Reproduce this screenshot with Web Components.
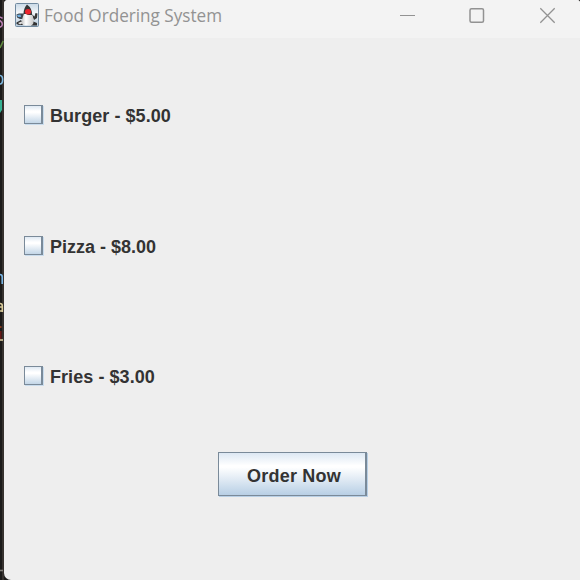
<!DOCTYPE html>
<html lang="en">
<head>
<meta charset="utf-8">
<title>Food Ordering System</title>
<style>
html,body{margin:0;width:580px;height:580px;overflow:hidden;background:#1c1b1a}
body{display:flex}
</style>
</head>
<body>
<editor-edge></editor-edge>
<app-window>
  <title-bar slot="title">Food Ordering System</title-bar>
  <check-item>Burger - $5.00</check-item>
  <check-item style="letter-spacing:0">Pizza - $8.00</check-item>
  <check-item>Fries - $3.00</check-item>
  <metal-button slot="actions">Order Now</metal-button>
</app-window>
<script>
const define = (name, html) => customElements.define(name, class extends HTMLElement {
  constructor() {
    super();
    const t = document.createElement('template');
    t.innerHTML = html;
    this.attachShadow({mode: 'open'}).append(t.content.cloneNode(true));
  }
});

define('editor-edge', `
<style>
:host{display:block;flex:none;width:4px;height:580px;overflow:hidden;
background:linear-gradient(90deg,#1b1a19 0 2px,#35312e 2px)}
svg{display:block}
</style>
<svg width="4" height="580" fill="none" stroke-width="1.6">
<path stroke="#b77fb2" d="M2.500 18.500C1 16.500-1 17-1 19S2.300 21 2.300 24S0 27.500-2 26"/>
<path stroke="#5f8a3f" d="M3.200 41L0 48"/>
<path stroke="#7fb9e0" d="M0 75.500C3.500 75 3.500 84 0 84"/>
<path fill="#36b193" d="M0 100H2V110L0 113Z"/>
<path stroke="#7ab6e4" d="M0 274.500Q2.200 274.500 2.200 277V284"/>
<path stroke="#d9cb9b" d="M0 303.500Q2.300 303.500 2.300 306V312M2 307H0M2 311H0"/>
<path stroke="#a5431f" d="M0 327H1.500"/><path stroke="#651a17" d="M.8 331V339"/>
<path stroke="#d6c89b" d="M0 340H3"/>
<path stroke="#807d78" d="M0 570.500H3"/>
</svg>`);

define('app-window', `
<style>
:host{display:flex;flex-direction:column;width:576px;height:580px;background:#eee;
border-radius:4px 3px 0 7px;overflow:hidden}
main{display:grid;grid-template-rows:131px 131px 129px;padding:11px 20px 0}
footer{display:flex;justify-content:center;padding-top:12px;padding-left:1px}
</style>
<slot name="title"></slot>
<main><slot></slot></main>
<footer><slot name="actions"></slot></footer>`);

define('title-bar', `
<style>
:host{display:flex;flex:none;box-sizing:border-box;height:38px;background:#f3f3f3;color:#929292;
padding:3px 24px 0 11px;align-items:flex-start;
font:17.500px/26px "Open Sans","Noto Sans",sans-serif}
.icon{flex:none;margin-right:5px}
svg{display:block}
.label{flex:1;height:26px}
.controls{display:flex;gap:54px;padding-top:4px}
</style>
<svg class="icon" width="24" height="24" viewBox="0 0 24 24">
<defs>
<linearGradient id="g" x2="0" y2="1"><stop stop-color="#c9d9e6"/><stop offset=".4" stop-color="#f2f6f9"/><stop offset="1" stop-color="#b5c9db"/></linearGradient>
<linearGradient id="b"><stop stop-color="#c4c4c4"/><stop offset=".35" stop-color="#fff"/><stop offset="1" stop-color="#c9c9c9"/></linearGradient>
</defs>
<rect x=".5" y=".5" width="23" height="23" rx="1" fill="url(#g)" stroke="#70899f"/>
<path d="M1.500 11.500L4 10.500L10 10.500L9.500 16L5 16L2 14.500Z" fill="#3f4851"/>
<path d="M2 12L5.500 11.500L6 14L3 14Z" fill="#70aee0"/>
<path d="M16 10.500L19.500 13.500L20.500 10L22.500 10.500L22 15L19 17Z" fill="#383838"/>
<path d="M1.500 19.500L6 17L9 22H4L1.500 21ZM17 18L22 20V22.500H16Z" fill="#333"/>
<path d="M3 20L6.500 18.500L8 20L5 21.500Z" fill="#ddd"/>
<path d="M9.500 9L7 16.500Q6 21.500 9 22.500H16Q19 21.500 18.500 17Q18 12 15.500 9Z" fill="url(#b)"/>
<path d="M12 1.500C10 3.500 8.500 7 8.500 11L11 11L13 12L17 12Q17.500 5.500 12 1.500Z" fill="#363636"/>
<ellipse cx="13" cy="8.700" rx="3" ry="2.700" fill="#ed242d"/>
</svg>
<span class="label"><svg width="185" height="26"><text x="0" y="19" textLength="178" lengthAdjust="spacingAndGlyphs" fill="currentColor">Food Ordering System</text></svg></span>
<span class="controls">
<svg width="16" height="16"><path d="M1 8.500H16" stroke="#929292"/></svg>
<svg width="16" height="16"><rect x="1" y="1.700" width="13.500" height="13.500" rx="1.500" fill="none" stroke="#929292" stroke-width="1.500"/></svg>
<svg width="17" height="17"><path d="M1.300 1.300L15.700 15.700M15.700 1.300L1.300 15.700" stroke="#929292" stroke-width="1.300"/></svg>
</span>`);

define('check-item', `
<style>
:host{display:flex;align-items:center;font:bold 18px "Liberation Sans",Arial,sans-serif;color:#333;letter-spacing:.06px}
i{flex:none;box-sizing:border-box;width:19px;height:19px;margin-right:7px;border:1px solid #7a8a99;
border-right-width:2px;background:linear-gradient(#dfe9f3,#fff 30%,#fff 38%,#c3d6e7);
box-shadow:1px 1px 0 #c9dced}
span{display:block;line-height:22px;white-space:nowrap;padding-top:3px}
</style>
<i></i><span><slot></slot></span>`);

define('metal-button', `
<style>
:host{display:flex;box-sizing:border-box;width:149px;height:44px;align-items:center;justify-content:center;
border:1px solid #7a8a99;border-right-width:2px;background:linear-gradient(#dde8f3,#fff 30%,#fff 34%,#b8cfe5);
box-shadow:1px 1px 0 #b8cfe5;font:bold 18px/22px "Liberation Sans",Arial,sans-serif;color:#333;
padding:4px 0 0 4px;letter-spacing:.2px}
</style>
<slot></slot>`);
</script>
</body>
</html>
